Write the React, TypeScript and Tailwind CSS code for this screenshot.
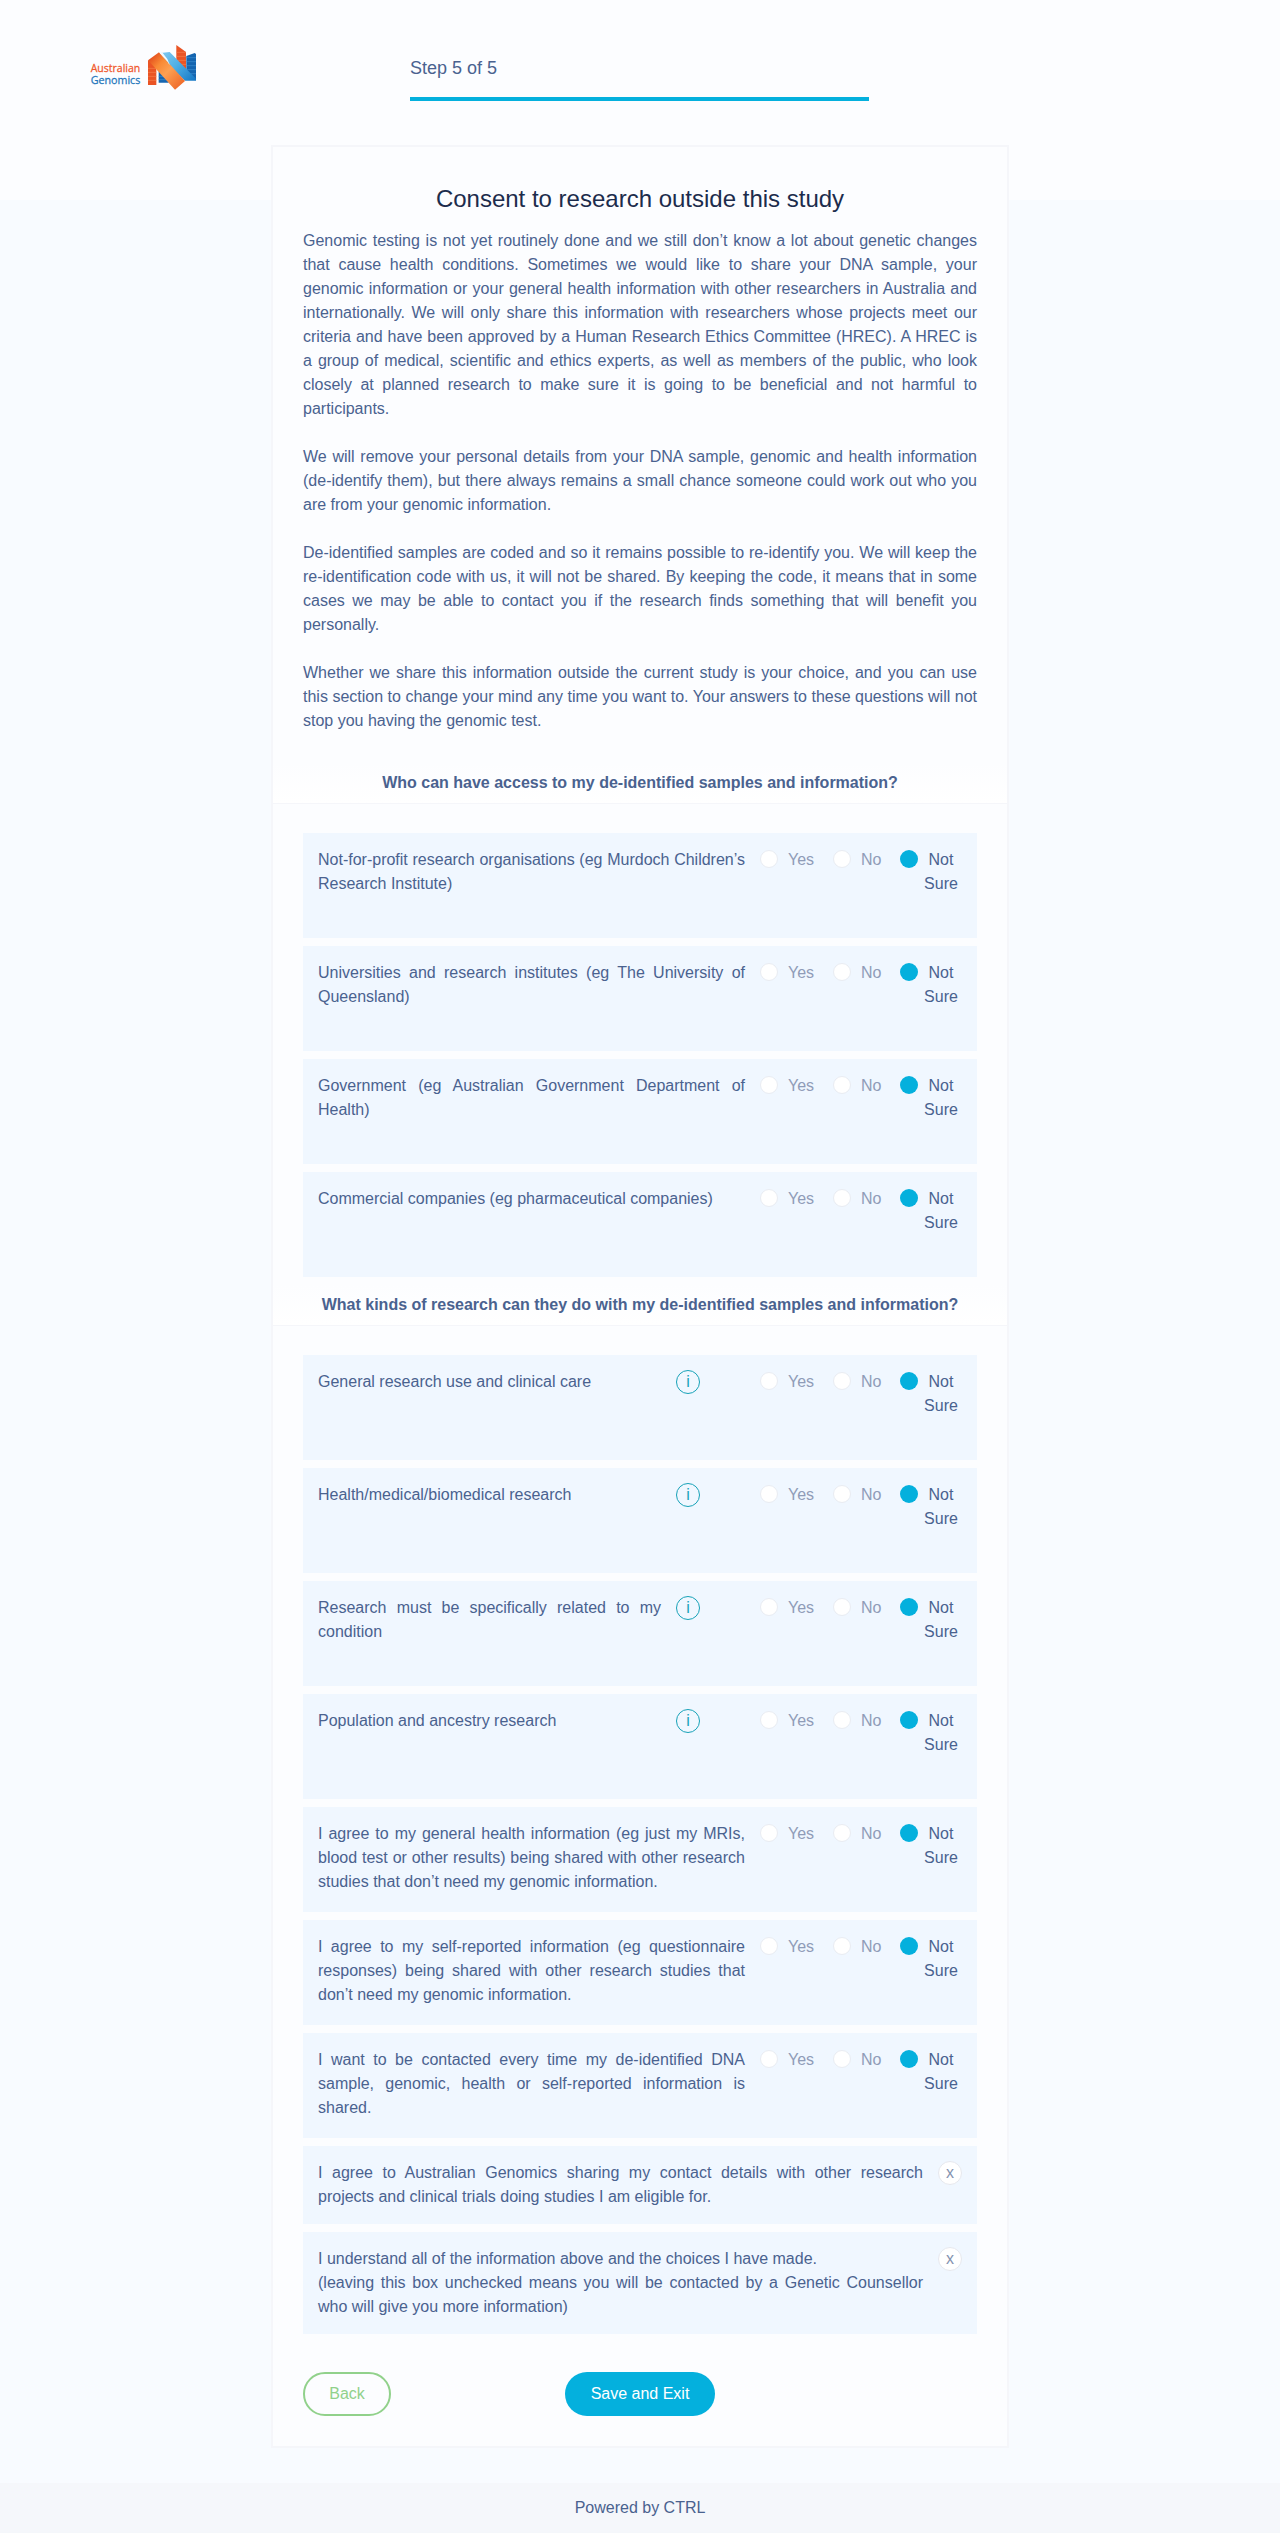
import React from "react";

function Logo() {
  return (
    <svg width="130" height="65" viewBox="0 0 390 195" className="ml-20 block shrink-0" aria-label="Australian Genomics">
      <defs>
        <linearGradient id="band-orange" x1="210" y1="70" x2="305" y2="160" gradientUnits="userSpaceOnUse">
          <stop offset="0" stopColor="#e5501f" />
          <stop offset="0.25" stopColor="#f98a35" />
          <stop offset="0.5" stopColor="#fda052" />
          <stop offset="1" stopColor="#ee6526" />
        </linearGradient>
        <linearGradient id="band-blue" x1="250" y1="55" x2="345" y2="145" gradientUnits="userSpaceOnUse">
          <stop offset="0" stopColor="#7cc6ee" />
          <stop offset="0.4" stopColor="#4fb0e6" />
          <stop offset="1" stopColor="#1173c2" />
        </linearGradient>
      </defs>
      <text x="32" y="112" fontFamily="'Open Sans', sans-serif" fontSize="34" fontWeight="500" fill="#f0592c" stroke="#f0592c" strokeWidth="0.8" textLength="149" lengthAdjust="spacingAndGlyphs">Australian</text>
      <text x="32" y="146" fontFamily="'Open Sans', sans-serif" fontSize="34" fontWeight="500" fill="#1f76bb" stroke="#1f76bb" strokeWidth="0.8" textLength="149" lengthAdjust="spacingAndGlyphs">Genomics</text>
      <path d="M204 76 L229 90 L229 150 L204 150Z" fill="#ea5425" />
      <path d="M236 100 L266 130 L266 143 L236 143Z" fill="#1565b0" />
      <path d="M289 30 L318 51 L318 118 L289 90Z" fill="#ea5425" />
      <path d="M319 63 L344 54 L348 57 L348 136 L319 110Z" fill="#1565b0" />
      <path d="M204 100H229M204 112H229M204 124H229M204 136H229M289 52H318M289 64H318M289 76H318M289 88H318" stroke="#f5824f" strokeWidth="2" />
      <path d="M236 124H258M236 134H266M319 68H348M319 80H348M319 92H348M319 104H348M319 116H348" stroke="#3c8fd0" strokeWidth="2" />
      <path d="M242 54 L269 51 L348 131 L348 137 L315 137 L266 91Z" fill="url(#band-blue)" />
      <path d="M204 76 L237 52 L315 138 L285 164Z" fill="url(#band-orange)" />
      <path d="M237 52 L248 54 L262 72 L268 86 L268 90 L264 82Z" fill="#f2f9fe" />
    </svg>
  );
}

function Choice({ label, selected = false }: { label: string; selected?: boolean }) {
  return (
    <div className="flex">
      <span
        className={
          selected
            ? "mt-[2px] size-[18px] shrink-0 rounded-full bg-[#04b0dd]"
            : "mt-[2px] size-[18px] shrink-0 rounded-full border border-[#e9ecf2] bg-white"
        }
      />
      <span className={selected ? "ml-[6px] w-[34px] text-center" : "ml-[10px] text-[#8f9cb8]"}>{label}</span>
    </div>
  );
}

function Question({ text, info = false }: { text: string; info?: boolean }) {
  return (
    <div className="mb-2 flex h-[105px] bg-[#f0f7ff] pt-[15px] pl-[15px]">
      <p className={info ? "w-[343px] text-justify" : "w-[427px] text-justify"}>{text}</p>
      {info && (
        <span className="ml-[15px] flex size-6 shrink-0 items-center justify-center rounded-full border border-[#17a2b8] text-[#17a2b8]">
          i
        </span>
      )}
      <div className={info ? "ml-[60px] flex" : "ml-[15px] flex"}>
        <div className="w-[73px]"><Choice label="Yes" /></div>
        <div className="w-[67px]"><Choice label="No" /></div>
        <Choice label="Not Sure" selected />
      </div>
    </div>
  );
}

function Agreement({ children, tall = false }: { children: React.ReactNode; tall?: boolean }) {
  return (
    <div className={(tall ? "h-[102px]" : "mb-2 h-[78px]") + " flex bg-[#f0f7ff] pt-[15px] pl-[15px]"}>
      <div className="w-[605px] text-justify">{children}</div>
      <span className="ml-[15px] flex size-6 shrink-0 items-center justify-center rounded-full border border-[#e6e8ee] bg-white text-[#8492af]">
        x
      </span>
    </div>
  );
}

function SectionHeading({ children }: { children: React.ReactNode }) {
  return (
    <h2 className="-mx-[30px] mb-[29px] h-[41px] border-b border-[#f5f6fa] bg-linear-to-b from-[#fcfdff] to-white pt-2 text-center font-bold">
      {children}
    </h2>
  );
}

const accessQuestions = [
  "Not-for-profit research organisations (eg Murdoch Children’s Research Institute)",
  "Universities and research institutes (eg The University of Queensland)",
  "Government (eg Australian Government Department of Health)",
  "Commercial companies (eg pharmaceutical companies)",
];

const researchQuestions = [
  { text: "General research use and clinical care", info: true },
  { text: "Health/medical/biomedical research", info: true },
  { text: "Research must be specifically related to my condition", info: true },
  { text: "Population and ancestry research", info: true },
  { text: "I agree to my general health information (eg just my MRIs, blood test or other results) being shared with other research studies that don’t need my genomic information." },
  { text: "I agree to my self-reported information (eg questionnaire responses) being shared with other research studies that don’t need my genomic information." },
  { text: "I want to be contacted every time my de-identified DNA sample, genomic, health or self-reported information is shared." },
];

export default function App() {
  return (
    <div className="min-h-[2533px] bg-[#f8fbff] bg-[linear-gradient(#fcfdff,#fcfdff)] bg-[length:100%_200px] bg-no-repeat font-['Liberation_Sans',Arial,sans-serif] text-base leading-6 text-[#4a628f]">
      <header className="flex h-[145px] pt-[35px]">
        <Logo />
        <div className="ml-[200px] w-[459px] pt-5">
          <p className="text-lg leading-[27px]">Step 5 of 5</p>
          <div className="mt-[15px] h-1 bg-[#04b0dd]" />
        </div>
      </header>

      <main className="mx-auto h-[2303px] w-[738px] border-2 border-[#f5f6fa] bg-[#fcfdff] px-[30px] pt-[34px]">
        <h1 className="mb-3 text-center text-2xl leading-[36px] text-[#1c2c4c]">Consent to research outside this study</h1>
        <div className="mb-[30px] flex flex-col gap-6 text-justify">
          <p>
            Genomic testing is not yet routinely done and we still don’t know a lot about genetic changes that cause health conditions. Sometimes we would like to share your DNA sample, your genomic information or your general health information with other researchers in Australia and internationally. We will only share this information with researchers whose projects meet our criteria and have been approved by a Human Research Ethics Committee (HREC). A HREC is a group of medical, scientific and ethics experts, as well as members of the public, who look closely at planned research to make sure it is going to be beneficial and not harmful to participants.
          </p>
          <p>
            We will remove your personal details from your DNA sample, genomic and health information (de-identify them), but there always remains a small chance someone could work out who you are from your genomic information.
          </p>
          <p>
            De-identified samples are coded and so it remains possible to re-identify you. We will keep the re-identification code with us, it will not be shared. By keeping the code, it means that in some cases we may be able to contact you if the research finds something that will benefit you personally.
          </p>
          <p>
            Whether we share this information outside the current study is your choice, and you can use this section to change your mind any time you want to. Your answers to these questions will not stop you having the genomic test.
          </p>
        </div>

        <SectionHeading>Who can have access to my de-identified samples and information?</SectionHeading>
        {accessQuestions.map((q) => (
          <Question key={q} text={q} />
        ))}

        <SectionHeading>What kinds of research can they do with my de-identified samples and information?</SectionHeading>
        {researchQuestions.map((q) => (
          <Question key={q.text} text={q.text} info={q.info} />
        ))}
        <Agreement>
          <p>I agree to Australian Genomics sharing my contact details with other research projects and clinical trials doing studies I am eligible for.</p>
        </Agreement>
        <Agreement tall>
          <p>I understand all of the information above and the choices I have made.</p>
          <p>(leaving this box unchecked means you will be contacted by a Genetic Counsellor who will give you more information)</p>
        </Agreement>

        <div className="mt-[38px] flex">
          <button className="h-11 w-[88px] rounded-[22px] border-2 border-[#91d18b] text-[#91d18b]">Back</button>
          <button className="ml-[174px] h-11 w-[150px] rounded-[22px] bg-[#04b0dd] text-white">Save and Exit</button>
        </div>
      </main>

      <footer className="mt-[35px] h-[50px] bg-[#f5f7fb] pt-[13px] text-center">Powered by CTRL</footer>
    </div>
  );
}
